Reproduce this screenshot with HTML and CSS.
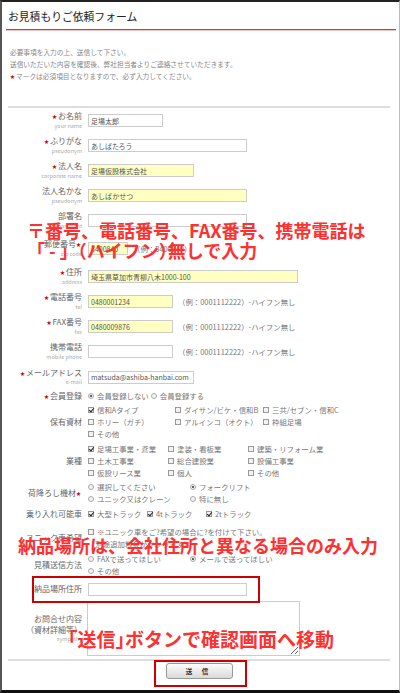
FILE: index.html
```html
<!DOCTYPE html>
<html lang="ja">
<head>
    <meta charset="UTF-8">
    <meta name="viewport" content="width=device-width, initial-scale=1.0">
    <title>お見積もりご依頼フォーム</title>
    <link rel="stylesheet" href="styles.css">
</head>
<body>
<div class="frame">

    <h1 class="title">お見積もりご依頼フォーム</h1>

    <div class="intro">
        <p>必要事項を入力の上、送信して下さい。</p>
        <p>送信いただいた内容を確認後、弊社担当者よりご連絡させていただきます。</p>
        <p><span class="req">★</span>マークは必須項目となりますので、必ず入力してください。</p>
    </div>

    <form class="form">
        <div class="row">
            <div class="lbl"><span class="jp"><span class="req">★</span>お名前</span><span class="en">your name</span></div>
            <div class="field"><input class="txt w75" type="text" value="足場太郎"></div>
        </div>
        <div class="row">
            <div class="lbl"><span class="jp"><span class="req">★</span>ふりがな</span><span class="en">pseudonym</span></div>
            <div class="field"><input class="txt w159" type="text" value="あしばたろう"></div>
        </div>
        <div class="row">
            <div class="lbl"><span class="jp"><span class="req">★</span>法人名</span><span class="en">corporate name</span></div>
            <div class="field"><input class="txt yel w106" type="text" value="足場仮設株式会社"></div>
        </div>
        <div class="row">
            <div class="lbl"><span class="jp">法人名かな</span><span class="en">pseudonym</span></div>
            <div class="field"><input class="txt yel w159" type="text" value="あしばかせつ"></div>
        </div>
        <div class="row">
            <div class="lbl"><span class="jp">部署名</span><span class="en">department</span></div>
            <div class="field"><input class="txt w159" type="text" value=""></div>
        </div>
        <div class="row r31">
            <div class="lbl"><span class="jp">郵便番号<span class="req">★</span></span><span class="en">zip code</span></div>
            <div class="field"><input class="txt yel w40" type="text" value="3400840"><span class="hint">（例：3400840）</span></div>
        </div>
        <div class="row">
            <div class="lbl"><span class="jp"><span class="req">★</span>住所</span><span class="en">address</span></div>
            <div class="field"><input class="txt yel w210" type="text" value="埼玉県草加市青柳八木1000-100"></div>
        </div>
        <div class="row">
            <div class="lbl"><span class="jp"><span class="req">★</span>電話番号</span><span class="en">tel</span></div>
            <div class="field"><input class="txt yel w85" type="text" value="0480001234"><span class="hint">（例：0001112222）-ハイフン無し</span></div>
        </div>
        <div class="row">
            <div class="lbl"><span class="jp"><span class="req">★</span>FAX番号</span><span class="en">fax</span></div>
            <div class="field"><input class="txt yel w85" type="text" value="0480009876"><span class="hint">（例：0001112222）-ハイフン無し</span></div>
        </div>
        <div class="row">
            <div class="lbl"><span class="jp">携帯電話</span><span class="en">mobile phone</span></div>
            <div class="field"><input class="txt w85" type="text" value=""><span class="hint">（例：0001112222）-ハイフン無し</span></div>
        </div>
        <div class="row r26">
            <div class="lbl"><span class="jp"><span class="req">★</span>メールアドレス</span><span class="en">e-mail</span></div>
            <div class="field"><input class="txt w106" type="text" value="matsuda@ashiba-hanbai.com"></div>
        </div>

        <div class="row opt-row r14">
            <div class="lbl"><span class="jp"><span class="req">★</span>会員登録</span></div>
            <div class="opts inline">
                <span class="opt"><span class="rd on"></span>会員登録しない</span>
                <span class="opt"><span class="rd"></span>会員登録する</span>
            </div>
        </div>
        <div class="row opt-row materials">
            <div class="lbl"><span class="jp">保有資材</span></div>
            <div class="opts cols-mat">
                <span class="opt"><span class="cb on"></span>信和Aタイプ</span>
                <span class="opt"><span class="cb"></span>ダイサン/ビケ・信和B</span>
                <span class="opt"><span class="cb"></span>三共/セブン・信和C</span>
                <span class="opt"><span class="cb"></span>ホリー（ガチ）</span>
                <span class="opt"><span class="cb"></span>アルインコ（オクト）</span>
                <span class="opt"><span class="cb"></span>枠組足場</span>
                <span class="opt"><span class="cb"></span>その他</span>
            </div>
        </div>
        <div class="row opt-row">
            <div class="lbl"><span class="jp">業種</span></div>
            <div class="opts cols-ind">
                <span class="opt"><span class="cb on"></span>足場工事業・鳶業</span>
                <span class="opt"><span class="cb"></span>塗装・看板業</span>
                <span class="opt"><span class="cb"></span>建築・リフォーム業</span>
                <span class="opt"><span class="cb"></span>土木工事業</span>
                <span class="opt"><span class="cb"></span>総合建設業</span>
                <span class="opt"><span class="cb"></span>設備工事業</span>
                <span class="opt"><span class="cb"></span>仮設リース業</span>
                <span class="opt"><span class="cb"></span>個人</span>
                <span class="opt"><span class="cb"></span>その他</span>
            </div>
        </div>
        <div class="row opt-row mt2">
            <div class="lbl"><span class="jp">荷降ろし機材<span class="req">★</span></span></div>
            <div class="opts cols-two">
                <span class="opt"><span class="rd"></span>選択してください</span>
                <span class="opt"><span class="rd on"></span>フォークリフト</span>
                <span class="opt"><span class="rd"></span>ユニック又はクレーン</span>
                <span class="opt"><span class="rd"></span>特に無し</span>
            </div>
        </div>
        <div class="row opt-row mt3">
            <div class="lbl"><span class="jp">乗り入れ可能車</span></div>
            <div class="opts cols-truck">
                <span class="opt"><span class="cb on"></span>大型トラック</span>
                <span class="opt"><span class="cb on"></span>4tトラック</span>
                <span class="opt"><span class="cb on"></span>2tトラック</span>
            </div>
        </div>
        <div class="row opt-row mt6">
            <div class="lbl"><span class="jp">ユニック車希望</span></div>
            <div class="opts">
                <span class="opt"><span class="cb"></span>※ユニック車をご?希望の場合に?を付けて下さい。</span>
                <span class="opt">（別途追加料金がかかります）</span>
            </div>
        </div>
        <div class="row opt-row mt3">
            <div class="lbl"><span class="jp">見積送信方法</span></div>
            <div class="opts cols-two">
                <span class="opt"><span class="rd"></span>FAXで送ってほしい</span>
                <span class="opt"><span class="rd on"></span>メールで送ってほしい</span>
                <span class="opt"><span class="rd"></span>その他</span>
            </div>
        </div>
        <div class="row r24">
            <div class="lbl"><span class="jp">納品場所住所</span></div>
            <div class="field"><input class="txt w159" type="text" value=""></div>
        </div>
        <div class="row r55">
            <div class="lbl"><span class="jp">お問合せ内容</span><span class="jp">（資材詳細等）</span><span class="en">sympathy</span></div>
            <div class="field"><textarea class="area"></textarea></div>
        </div>

        <div class="foot">
            <button type="button" class="send">送 信</button>
        </div>
    </form>

    <!-- 注意書き -->
    <div class="note note1">〒番号、電話番号、FAX番号、携帯電話は<br>「 - 」<span class="halt">（</span>ハイフン<span class="halt">）</span>無しで入力</div>
    <div class="note note2">納品場所は、会社住所と異なる場合のみ入力</div>
    <div class="note note3"><span class="halt">「</span>送信<span class="halt">」</span>ボタンで確認画面へ移動</div>

    <div class="mark mark1"></div>
    <div class="mark mark2"></div>
</div>
</body>
</html>
```

FILE: styles.css
```css
* {
    box-sizing: border-box;
}
body {
    margin: 0;
    background: #fff;
    font-family: "Noto Sans CJK JP", sans-serif;
    color: #666;
}
.frame {
    position: relative;
    width: 400px;
    height: 693px;
    border-left: 2px solid #555;
    border-top: 2px solid #222;
    border-bottom: 3px solid #111;
    border-right: 1px solid #bbb;
    overflow: hidden;
}
.title {
    margin: 0 3px 0 4px;
    padding: 7px 0 6px 2px;
    font-size: 10.8px;
    line-height: 14px;
    font-weight: normal;
    color: #222;
    border-bottom: 1px solid #d33;
    box-shadow: 0 1px 0 #f3c4c4;
}
.intro {
    margin: 17px 0 0 8px;
    font-size: 6.7px;
    line-height: 11.5px;
    color: #888;
}
.intro p {
    margin: 0;
}
.req {
    color: #c00;
    font-size: 5px;
    margin-right: 1px;
    vertical-align: 1px;
}
.form {
    margin: 23.5px 9px 0 6px;
    border-top: 2px solid #ddd;
}
.row {
    display: flex;
    align-items: center;
    height: 25px;
}
.r14 { height: 14px; }
.r24 { height: 24px; }
.r26 { height: 26px; }
.r31 { height: 31px; }
.r55 { height: 55px; }
.lbl {
    width: 74px;
    flex: none;
    display: flex;
    flex-direction: column;
    align-items: flex-end;
    text-align: right;
    white-space: nowrap;
}
.lbl .jp {
    font-size: 8px;
    line-height: 10.5px;
    color: #666;
}
.lbl .en {
    font-size: 5.5px;
    line-height: 8px;
    color: #aaa;
}
.field {
    margin-left: 6px;
    display: flex;
    align-items: center;
}
.txt {
    display: block;
    height: 13px;
    padding: 0 2px;
    border: 1px solid #ccc;
    background: #fff;
    font: 7px "Noto Sans CJK JP", sans-serif;
    color: #555;
    outline: none;
}
.txt.yel {
    background: #ffffc2;
}
.w40 { width: 40px; }
.w75 { width: 75px; }
.w85 { width: 85px; }
.w106 { width: 106px; }
.w159 { width: 159px; }
.w210 { width: 210px; }
.hint {
    margin-left: 5px;
    font-size: 7.4px;
    color: #777;
    white-space: nowrap;
}

/* options */
.opt-row {
    height: auto;
}
.materials {
    padding: 2px 0 3px;
}
.mt2 { margin-top: 2px; }
.mt3 { margin-top: 3px; }
.mt6 { margin-top: 6px; }
.opts {
    margin-left: 6px;
    display: grid;
    font-size: 7.4px;
    line-height: 12px;
    color: #777;
}
.inline {
    display: flex;
    gap: 2px;
}
.cols-mat { grid-template-columns: 87px 88px auto; }
.cols-ind { grid-template-columns: 80px 80px auto; }
.cols-two { grid-template-columns: 102px auto; }
.cols-truck { grid-template-columns: 59px 59px auto; }
.opt {
    display: flex;
    align-items: center;
    white-space: nowrap;
}
.cb, .rd {
    position: relative;
    flex: none;
    width: 6px;
    height: 6px;
    margin-right: 3px;
    border: 1px solid #999;
    background: #f2f2f2;
}
.cb.on::after {
    content: "";
    position: absolute;
    left: 1px;
    top: -1px;
    width: 2px;
    height: 4px;
    border-right: 1px solid #222;
    border-bottom: 1px solid #222;
    transform: rotate(40deg);
}
.rd {
    border-radius: 50%;
    border-color: #aaa;
}
.rd.on::after {
    content: "";
    position: absolute;
    left: 1px;
    top: 1px;
    width: 2px;
    height: 2px;
    border-radius: 50%;
    background: #333;
}
.area {
    display: block;
    width: 213px;
    height: 55px;
    margin-left: -1px;
    border: 1px solid #ccc;
    resize: both;
    font: 7px "Noto Sans CJK JP", sans-serif;
}
.foot {
    margin-top: 3px;
    padding-top: 2px;
    border-top: 2px solid #ddd;
}
.send {
    display: block;
    margin: 0 auto;
    width: 67px;
    height: 16px;
    padding: 0;
    border: 1px solid #999;
    border-radius: 3px;
    background: linear-gradient(#fdfdfd, #dadada);
    font: bold 6.5px "Noto Sans CJK JP", sans-serif;
    letter-spacing: 4px;
    color: #333;
}

/* 注意書き */
.note {
    position: absolute;
    color: #ff3030;
    font-weight: 700;
    font-size: 18px;
    line-height: 20px;
    white-space: nowrap;
}
.note1 {
    left: 25px;
    top: 218px;
}
.note2 {
    left: 16px;
    top: 533px;
}
.note3 {
    left: 66px;
    top: 627px;
    font-size: 19px;
}
.halt {
    font-feature-settings: "halt";
}
.mark {
    position: absolute;
    border: 2px solid #c00;
}
.mark1 {
    left: 30px;
    top: 574px;
    width: 228px;
    height: 27px;
}
.mark2 {
    left: 152px;
    top: 658px;
    width: 93px;
    height: 27px;
}
```
